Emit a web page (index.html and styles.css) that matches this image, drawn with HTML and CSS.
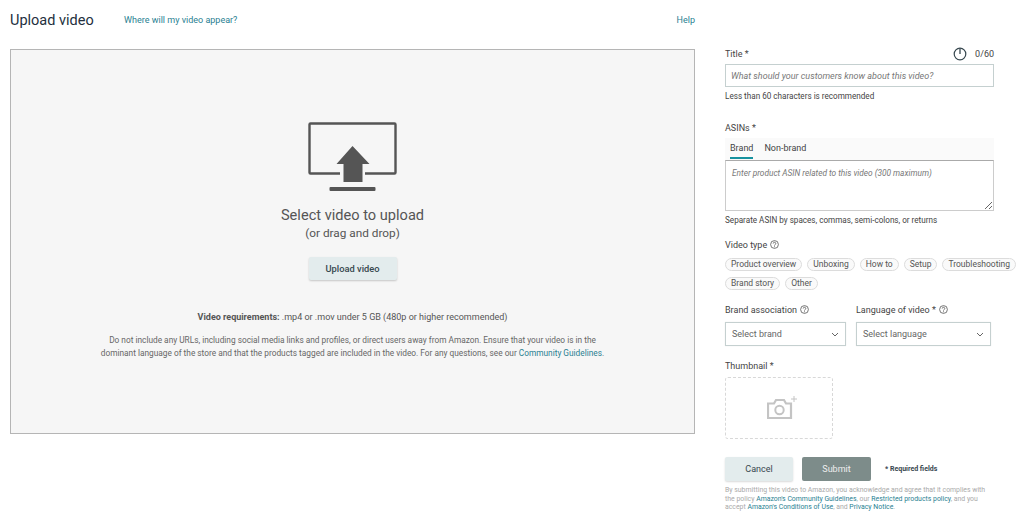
FILE: index.html
```html
<!DOCTYPE html>
<html lang="en">
<head>
<meta charset="UTF-8">
<meta name="viewport" content="width=device-width, initial-scale=1.0">
<title>Upload video</title>
<link rel="stylesheet" href="styles.css">
</head>
<body>

<div class="page">
  <div class="left-col">
    <div class="top-bar">
      <h1>Upload video</h1>
      <a class="link where-link" href="#">Where will my video appear?</a>
      <a class="link help-link" href="#">Help</a>
    </div>

    <div class="drop-zone">
      <svg class="upload-icon" width="90" height="72" viewBox="0 0 90 72">
        <rect x="1.500" y="1.500" width="86" height="50" rx="1" fill="none" stroke="#555" stroke-width="2.400"/>
        <path d="M44.500 22 L64 44 L57 44 L57 61 L32 61 L32 44 L25 44 Z" fill="#f6f6f6"/>
        <path d="M44.500 24 L61.500 42 L54.500 42 L54.500 60 L35.500 60 L35.500 42 L28.500 42 Z" fill="#555"/>
        <rect x="21.500" y="65" width="46" height="4" rx="1" fill="#555"/>
      </svg>
      <div class="select-text">Select video to upload</div>
      <div class="drag-text">(or drag and drop)</div>
      <button class="btn upload-btn" type="button">Upload video</button>
      <p class="requirements"><b>Video requirements:</b> .mp4 or .mov under 5 GB (480p or higher recommended)</p>
      <p class="notice">Do not include any URLs, including social media links and profiles, or direct users away from Amazon. Ensure that your video is in the dominant language of the store and that the products tagged are included in the video. For any questions, see our <a class="link" href="#">Community Guidelines</a>.</p>
    </div>
  </div>

  <form class="side-form">
    <div class="title-row">
      <label for="title">Title *</label>
      <span class="counter">
        <svg width="14" height="14" viewBox="0 0 14 14"><circle cx="7" cy="7" r="5.800" fill="none" stroke="#37474f" stroke-width="1.200"/><path d="M7 1.500V7" stroke="#37474f" stroke-width="1.300"/></svg>
        0/60
      </span>
    </div>
    <input class="text-input" id="title" type="text" placeholder="What should your customers know about this video?">
    <div class="hint">Less than 60 characters is recommended</div>

    <label class="asin-label" for="asin">ASINs *</label>
    <div class="tabs">
      <span class="tab active">Brand</span>
      <span class="tab">Non-brand</span>
    </div>
    <textarea class="asin-box" id="asin" placeholder="Enter product ASIN related to this video (300 maximum)"></textarea>
    <div class="hint asin-hint">Separate ASIN by spaces, commas, semi-colons, or returns</div>

    <div class="field-label type-label">Video type <svg class="help-icon" width="9" height="9" viewBox="0 0 9 9"><circle cx="4.500" cy="4.500" r="3.900" fill="none" stroke="#555" stroke-width=".8"/><path d="M3.200 3.500a1.300 1.300 0 1 1 1.900 1.200c-.4.2-.6.4-.6.8" fill="none" stroke="#555" stroke-width=".8"/><circle cx="4.500" cy="6.700" r=".5" fill="#555"/></svg></div>
    <div class="chips">
      <span class="chip">Product overview</span>
      <span class="chip">Unboxing</span>
      <span class="chip">How to</span>
      <span class="chip">Setup</span>
      <span class="chip">Troubleshooting</span>
    </div>
    <div class="chips">
      <span class="chip">Brand story</span>
      <span class="chip">Other</span>
    </div>

    <div class="select-row">
      <div class="select-col">
        <div class="field-label">Brand association <svg class="help-icon" width="9" height="9" viewBox="0 0 9 9"><circle cx="4.500" cy="4.500" r="3.900" fill="none" stroke="#555" stroke-width=".8"/><path d="M3.200 3.500a1.300 1.300 0 1 1 1.900 1.200c-.4.2-.6.4-.6.8" fill="none" stroke="#555" stroke-width=".8"/><circle cx="4.500" cy="6.700" r=".5" fill="#555"/></svg></div>
        <div class="select-box">Select brand
          <svg width="8" height="5" viewBox="0 0 8 5"><path d="M1 1l3 3 3-3" fill="none" stroke="#666" stroke-width="1"/></svg>
        </div>
      </div>
      <div class="select-col">
        <div class="field-label">Language of video * <svg class="help-icon" width="9" height="9" viewBox="0 0 9 9"><circle cx="4.500" cy="4.500" r="3.900" fill="none" stroke="#555" stroke-width=".8"/><path d="M3.200 3.500a1.300 1.300 0 1 1 1.900 1.200c-.4.2-.6.4-.6.8" fill="none" stroke="#555" stroke-width=".8"/><circle cx="4.500" cy="6.700" r=".5" fill="#555"/></svg></div>
        <div class="select-box">Select language
          <svg width="8" height="5" viewBox="0 0 8 5"><path d="M1 1l3 3 3-3" fill="none" stroke="#666" stroke-width="1"/></svg>
        </div>
      </div>
    </div>

    <div class="field-label thumb-label">Thumbnail *</div>
    <div class="thumb-box">
      <svg class="thumb-icon" width="30" height="24" viewBox="0 0 30 24">
        <path d="M1 7.500h6l2-3.500h8l2 3.500h5v14.500H1z" fill="none" stroke="#c4c4c4" stroke-width="2.200"/>
        <circle cx="12.500" cy="14" r="4.200" fill="none" stroke="#c4c4c4" stroke-width="2"/>
        <path d="M27 0v6M24 3h6" stroke="#c4c4c4" stroke-width="1"/>
      </svg>
    </div>

    <div class="actions">
      <button class="btn cancel-btn" type="button">Cancel</button>
      <button class="btn submit-btn" type="button">Submit</button>
      <span class="required">* Required fields</span>
    </div>
    <p class="legal">By submitting this video to Amazon, you acknowledge and agree that it complies with the policy <a class="link" href="#">Amazon's Community Guidelines</a>, our <a class="link" href="#">Restricted products policy</a>, and you accept <a class="link" href="#">Amazon's Conditions of Use</a>, and <a class="link" href="#">Privacy Notice</a>.</p>
  </form>
</div>

</body>
</html>
```

FILE: styles.css
```css
* {
  box-sizing: border-box;
}
html, body {
  height: 100%;
}
body {
  margin: 0;
  overflow: hidden;
  background: #fff;
  color: #333;
  font-family: Roboto, Arial, sans-serif;
  font-size: 9px;
}
.link {
  color: #2a7f92;
  text-decoration: none;
}
.page {
  display: flex;
  padding-left: 10px;
}
.left-col {
  width: 685px;
  margin-right: 30px;
  flex: none;
}
.top-bar {
  display: flex;
  align-items: center;
  height: 49px;
  padding-bottom: 9px;
}
.top-bar h1 {
  margin: 0;
  width: 114px;
  font-size: 14.500px;
  font-weight: 400;
  color: #232f3e;
}
.where-link {
  font-size: 9px;
}
.help-link {
  margin-left: auto;
  font-size: 9px;
}
.drop-zone {
  display: flex;
  flex-direction: column;
  align-items: center;
  height: 385px;
  padding-top: 72px;
  background: #f6f6f6;
  border: 1px solid #b5b5b5;
  text-align: center;
}
.select-text {
  margin-top: 12px;
  font-size: 14.600px;
  line-height: 18px;
  color: #555;
}
.drag-text {
  margin-top: 1px;
  font-size: 11.800px;
  line-height: 16px;
  color: #555;
}
.btn {
  border: none;
  border-radius: 2px;
  font-family: inherit;
}
.upload-btn {
  margin-top: 16px;
  width: 88px;
  height: 23px;
  background: #e3eced;
  box-shadow: 0 1px 2px rgba(0, 0, 0, .2);
  color: #37474f;
  font-size: 9.300px;
  font-weight: 500;
}
.requirements {
  margin: 31px 0 0;
  font-size: 9px;
  line-height: 13px;
  color: #555;
}
.notice {
  margin: 10px 0 0;
  width: 515px;
  font-size: 8.300px;
  line-height: 13px;
  color: #666;
}
.side-form {
  width: 269px;
  flex: none;
  padding-top: 46px;
}
label, .field-label {
  display: block;
  font-size: 9px;
  line-height: 13px;
  color: #444;
}
.title-row {
  display: flex;
  justify-content: space-between;
  align-items: center;
  height: 16px;
}
.counter {
  display: flex;
  align-items: center;
  gap: 8px;
  font-size: 9px;
  color: #444;
}
.text-input {
  display: block;
  width: 100%;
  height: 23px;
  margin-top: 2px;
  padding: 0 5px;
  border: 1px solid #c5d0d0;
  font-family: inherit;
  font-size: 9px;
  outline: none;
}
.text-input::placeholder, .asin-box::placeholder {
  color: #777;
  font-style: italic;
  opacity: 1;
}
.hint {
  margin-top: 3px;
  font-size: 8.150px;
  line-height: 12px;
  color: #444;
}
.asin-label {
  margin-top: 20px;
}
.tabs {
  display: flex;
  height: 22px;
  margin-top: 3px;
  padding-left: 5px;
  background: #fafafa;
  gap: 11px;
}
.tab {
  height: 21px;
  line-height: 20px;
  font-size: 9px;
  color: #444;
}
.tab.active {
  border-bottom: 2px solid #17929f;
}
.asin-box {
  display: block;
  width: 100%;
  height: 51px;
  padding: 7px 6px;
  border: 1px solid #ccc;
  border-top: 1px solid #aaa;
  font-family: inherit;
  font-size: 8.300px;
  outline: none;
}
.asin-hint {
  margin-top: 3px;
}
.type-label {
  margin-top: 13px;
}
.help-icon {
  vertical-align: -1px;
  margin-left: 1px;
}
.chips {
  display: flex;
  gap: 5px;
  margin-top: 6px;
  width: 300px;
}
.chip {
  height: 13px;
  padding: 0 5px;
  border: 1px solid #dcdcdc;
  border-radius: 7px;
  background: #fafafa;
  font-size: 8.500px;
  line-height: 11px;
  color: #555;
}
.select-row {
  display: flex;
  gap: 10px;
  margin-top: 14px;
}
.select-col {
  width: 121px;
}
.select-col + .select-col {
  width: 135px;
}
.select-box {
  display: flex;
  justify-content: space-between;
  align-items: center;
  height: 24px;
  margin-top: 5px;
  padding: 0 6px;
  border: 1px solid #c5d0d0;
  box-shadow: 0 0 1px rgba(0, 0, 0, .1);
  font-size: 9px;
  color: #666;
}
.thumb-label {
  margin-top: 14px;
}
.thumb-box {
  display: flex;
  align-items: center;
  justify-content: center;
  width: 108px;
  height: 62px;
  margin-top: 4px;
  padding: 0 0 0 5px;
  border: 1px dashed #d8d8d8;
  border-radius: 3px;
}
.actions {
  display: flex;
  align-items: center;
  margin-top: 18px;
}
.cancel-btn, .submit-btn {
  height: 24px;
  font-size: 9px;
}
.cancel-btn {
  width: 68px;
  background: #e3eced;
  color: #37474f;
  box-shadow: 0 1px 2px rgba(0, 0, 0, .15);
}
.submit-btn {
  width: 69px;
  margin-left: 9px;
  background: #7d8c8a;
  color: #eee;
}
.required {
  margin-left: 14px;
  font-size: 7px;
  font-weight: 700;
  color: #37474f;
}
.legal {
  margin: 5px 0 0;
  width: 268px;
  font-size: 6.900px;
  line-height: 8.500px;
  color: #aaa;
}
```
